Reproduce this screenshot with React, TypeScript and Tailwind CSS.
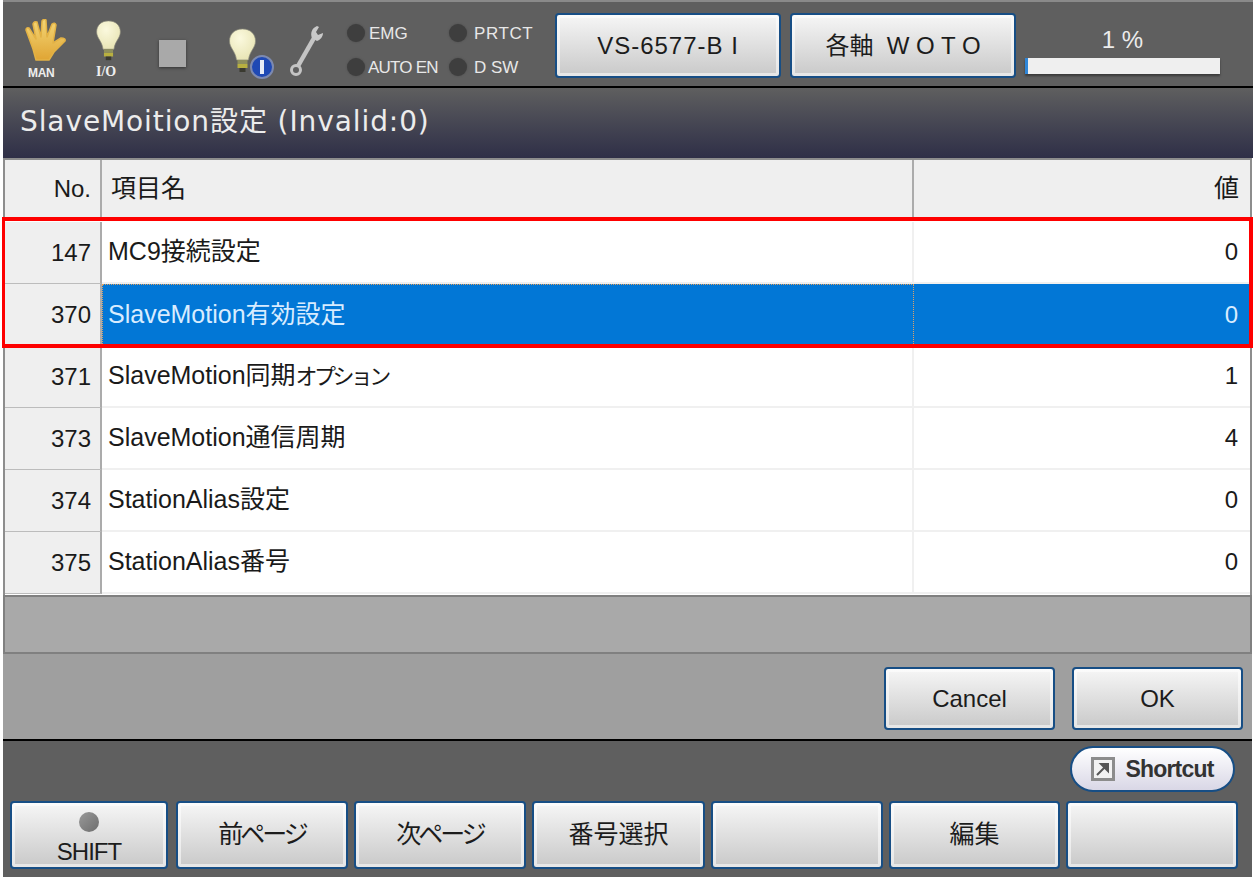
const jp = "font-['Liberation_Sans','Noto_Sans_CJK_JP',sans-serif]";

const rows = [
  { no: 147, name: "MC9接続設定", value: 0 },
  { no: 370, name: "SlaveMotion有効設定", value: 0, selected: true },
  { no: 371, name: "SlaveMotion同期", kana: "オプション", value: 1 },
  { no: 373, name: "SlaveMotion通信周期", value: 4 },
  { no: 374, name: "StationAlias設定", value: 0 },
  { no: 375, name: "StationAlias番号", value: 0 },
];

const footerKeys = [
  { label: "前ページ", className: "w-[172px] tracking-[-3px]" },
  { label: "次ページ", className: "w-[172px] tracking-[-3px]" },
  { label: "番号選択", className: "w-[173px]" },
  { label: "", className: "w-[172px]" },
  { label: "編集", className: "w-[171px]" },
  { label: "", className: "w-[172px]" },
];

const Bulb = ({ className }: { className: string }) => (
  <svg viewBox="0 0 28 46" className={className}>
    <defs>
      <radialGradient id="glass" cx="0.4" cy="0.3" r="0.8">
        <stop offset="0" stopColor="#fbf9de" />
        <stop offset="1" stopColor="#e6e2b0" />
      </radialGradient>
    </defs>
    <path d="M14 1C6 1 1 6 1 13c0 7 6 10 7 19h12c1-9 7-12 7-19C27 6 22 1 14 1Z" fill="url(#glass)" stroke="#8a897a" strokeWidth="0.7" />
    <rect x="9" y="32" width="10" height="4" fill="#8e8f5c" />
    <rect x="9" y="36" width="10" height="4" fill="#b8b040" />
    <rect x="11" y="40" width="6" height="4" fill="#3a3a30" />
  </svg>
);

const Lamp = ({ label, gap, tracking }: { label: string; gap: string; tracking: string }) => (
  <div className={`flex items-center ${gap}`}>
    <span className="h-[18px] w-[18px] shrink-0 rounded-full bg-[#3e3e3e] shadow-[0_0_2px_#4a4a4a]" />
    <span className={`whitespace-nowrap text-[17px] leading-none text-[#e8e8e8] ${tracking}`}>{label}</span>
  </div>
);

const Btn = ({ className, children }: { className: string; children?: React.ReactNode }) => (
  <button className={`flex items-center justify-center rounded-[4px] border-2 border-[#174e85] bg-gradient-to-b from-[#f6f6f6] to-[#c9c9c9] shadow-[inset_0_0_0_3px_rgba(255,255,255,0.55)] text-[#1c1c1c] ${className}`}>
    {children}
  </button>
);

export default function App() {
  return (
    <div className={`relative flex h-[879px] w-[1253px] flex-col overflow-hidden bg-white pl-[3px] ${jp}`}>
      {/* status bar */}
      <div className="flex h-[88px] shrink-0 items-start border-t-2 border-b-2 border-t-[#8a8a8a] border-b-black bg-[#5f5f5f]">
        <div className="relative ml-[22px] mt-[17px] h-[60px] w-[42px] shrink-0">
          <svg viewBox="0 0 42 42" className="h-[42px] w-[42px] blur-[0.4px]">
            <defs>
              <linearGradient id="hand" x1="0" y1="0" x2="0" y2="1">
                <stop offset="0" stopColor="#f3d677" />
                <stop offset="1" stopColor="#e0a534" />
              </linearGradient>
            </defs>
            <path d="M11 41 8 30 1 11q0-3 3-2l7 11L8 5q1-3 4-2l4 15 1-16q2-3 4-1l1 17 5-13q3-2 4 1l-3 18 8-5q5 0 4 3L29 33l-5 8Z" fill="url(#hand)" stroke="#e3b245" strokeWidth="1.5" strokeLinejoin="round" />
          </svg>
          <span className="absolute bottom-[0px] left-[3px] text-[12px] font-bold leading-none tracking-[-0.3px] text-[#eeeeee]">MAN</span>
        </div>
        <div className="relative ml-[25px] mt-[18px] h-[59px] w-[32px] shrink-0">
          <Bulb className="ml-[3px] h-[42px] w-[27px] blur-[0.4px]" />
          <span className="absolute bottom-[0px] left-[4px] font-['Liberation_Serif',serif] text-[14px] font-bold leading-none text-[#eeeeee]">I/O</span>
        </div>
        <div className="ml-[35px] mt-[38px] h-[27px] w-[27px] shrink-0 bg-[#a9a9a9] shadow-[0_1px_3px_#333]" />
        <div className="relative ml-[40px] mt-[26px] h-[52px] w-[47px] shrink-0">
          <Bulb className="ml-[2px] h-[46px] w-[29px] blur-[0.4px]" />
          <svg viewBox="0 0 24 24" className="absolute left-[24px] top-[27px] h-[24px] w-[24px] blur-[0.4px]">
            <circle cx="12" cy="12" r="11" fill="#1f49b4" stroke="#7d8ab0" strokeWidth="2" />
            <rect x="10" y="5" width="4" height="14" fill="#e8ecf6" />
          </svg>
        </div>
        <svg viewBox="0 0 34 56" className="ml-[17px] mt-[22px] h-[56px] w-[34px] shrink-0 blur-[0.4px]">
          <path d="M8 42 24 14" stroke="#c4c4c4" strokeWidth="4.5" />
          <path d="M27 2c-5 2-7 7-5 12l5 3c3-1 6-4 6-8l-5 2-2-3 3-5Z" fill="#c9c9c9" />
          <circle cx="6" cy="46" r="4.5" fill="none" stroke="#c4c4c4" strokeWidth="3" />
        </svg>
        <div className="ml-[23px] mt-[22px] grid h-[52px] w-[196px] shrink-0 grid-cols-[102px_94px] content-between">
          <Lamp label="EMG" gap="gap-[4px]" tracking="tracking-[0px]" />
          <Lamp label="PRTCT" gap="gap-[7px]" tracking="tracking-[0.6px]" />
          <Lamp label="AUTO EN" gap="gap-[3px]" tracking="tracking-[-0.8px]" />
          <Lamp label="D SW" gap="gap-[7px]" tracking="tracking-[0px]" />
        </div>
        <Btn className="ml-[12px] mt-[11px] h-[65px] w-[226px] shrink-0 text-[24px] tracking-[1px]">VS-6577-B I</Btn>
        <Btn className="ml-[9px] mt-[11px] h-[65px] w-[226px] shrink-0 text-[24px]">各軸&nbsp;&nbsp;W O T O</Btn>
        <div className="ml-[9px] mt-[26px] flex w-[195px] shrink-0 flex-col items-center">
          <span className="h-[24px] text-[24px] leading-none text-[#ececec]">1 %</span>
          <div className="mt-[6px] h-[16px] w-full border-l-[3px] border-l-[#2f86d8] bg-[#efefef] shadow-[0_2px_2px_#3a3a3a]" />
        </div>
      </div>

      {/* title */}
      <div className="flex h-[70px] shrink-0 items-center bg-gradient-to-b from-[#5f5f5f] to-[#2f2f47] pb-[3px] pl-[17px]">
        <h1 className="font-['DejaVu_Sans','Noto_Sans_CJK_JP',sans-serif] text-[28px] font-normal leading-none tracking-[0.9px] text-[#ececec]">SlaveMoition設定 (Invalid:0)</h1>
      </div>

      {/* table */}
      <div className="mr-[1px] h-[437px] shrink-0 border-x-2 border-t-2 border-[#8d8d8d] bg-white text-[24px] text-[#1a1a1a]">
        <div className="flex h-[59px] border-b border-[#c8c8c8] bg-[#efefef]">
          <div className="flex w-[97px] items-center justify-end border-r-2 border-[#ababab] pr-[9px]">No.</div>
          <div className="flex w-[812px] items-center border-r-2 border-[#ababab] pl-[9px] text-[25px]">項目名</div>
          <div className="flex flex-1 items-center justify-end pr-[11px] text-[25px]">値</div>
        </div>
        <div className="h-[3px]" />
        {rows.map((row) => (
          <div key={row.no} className="flex h-[62px]">
            <div className="flex w-[97px] items-center justify-end border-r-2 border-b border-r-[#ababab] border-b-[#bcbcbc] bg-[#efefef] pr-[9px]">{row.no}</div>
            {row.selected ? (
              <>
                <div className="flex w-[812px] items-center border border-dotted border-[#e0a060] bg-[#0277d6] pl-[5px] text-[25px] text-[#d8ecff]">{row.name}</div>
                <div className="flex flex-1 items-center justify-end bg-[#0277d6] pr-[12px] text-[#d8ecff]">{row.value}</div>
              </>
            ) : (
              <>
                <div className="flex w-[812px] items-center border-r-2 border-b-2 border-[#f0f0f0] pl-[6px] text-[25px]">
                  {row.name}
                  {row.kana && <span className="text-[22px] tracking-[-3.6px]">{row.kana}</span>}
                </div>
                <div className="flex flex-1 items-center justify-end border-b-2 border-[#f0f0f0] pr-[12px]">{row.value}</div>
              </>
            )}
          </div>
        ))}
      </div>

      {/* empty band */}
      <div className="mr-[1px] h-[59px] shrink-0 border-2 border-[#808080] bg-[#a9a9a9]" />

      {/* dialog buttons */}
      <div className="mr-[1px] flex h-[87px] shrink-0 items-start justify-end gap-[17px] border-b-2 border-b-black bg-[#9f9f9f] pr-[9px] pt-[13px]">
        <Btn className="h-[63px] w-[171px] text-[24px]">Cancel</Btn>
        <Btn className="h-[63px] w-[171px] text-[24px]">OK</Btn>
      </div>

      {/* shortcut + function keys */}
      <div className="mr-[1px] flex h-[136px] shrink-0 flex-col bg-[#5f5f5f]">
        <div className="flex h-[60px] justify-end pr-[17px] pt-[5px]">
          <button className="flex h-[46px] w-[165px] items-center justify-center gap-[10px] rounded-full border-2 border-[#174e85] bg-gradient-to-b from-[#ffffff] to-[#d9d7e6] text-[23px] font-bold tracking-[-0.8px] text-[#333]">
            <svg viewBox="0 0 24 24" className="h-[24px] w-[24px] shrink-0">
              <rect x="1.5" y="1.5" width="21" height="21" fill="#f2f2f2" stroke="#8c8c8c" strokeWidth="3" />
              <path d="M6 18 16 8M10 7h7v7Z" stroke="#555" strokeWidth="2" fill="#555" />
            </svg>
            Shortcut
          </button>
        </div>
        <div className="flex h-[68px] items-start gap-[6px] pl-[7px]">
          <Btn className="relative mr-[2px] h-[68px] w-[158px] shrink-0 items-end pb-[3px] text-[24px] leading-none tracking-[-1px]">
            <span className="absolute left-1/2 top-[9px] h-[20px] w-[20px] -translate-x-1/2 rounded-full bg-gradient-to-br from-[#9a9a9a] to-[#6d6d6d]" />
            SHIFT
          </Btn>
          {footerKeys.map((key, i) => (
            <Btn key={i} className={`h-[68px] shrink-0 text-[25px] ${key.className}`}>{key.label}</Btn>
          ))}
        </div>
      </div>

      {/* red highlight over rows 147 and 370 */}
      <div className="pointer-events-none absolute left-[2px] top-[217px] h-[131px] w-[1251px] border-[4px] border-l-[3px] border-[#fe0000]" />
    </div>
  );
}
